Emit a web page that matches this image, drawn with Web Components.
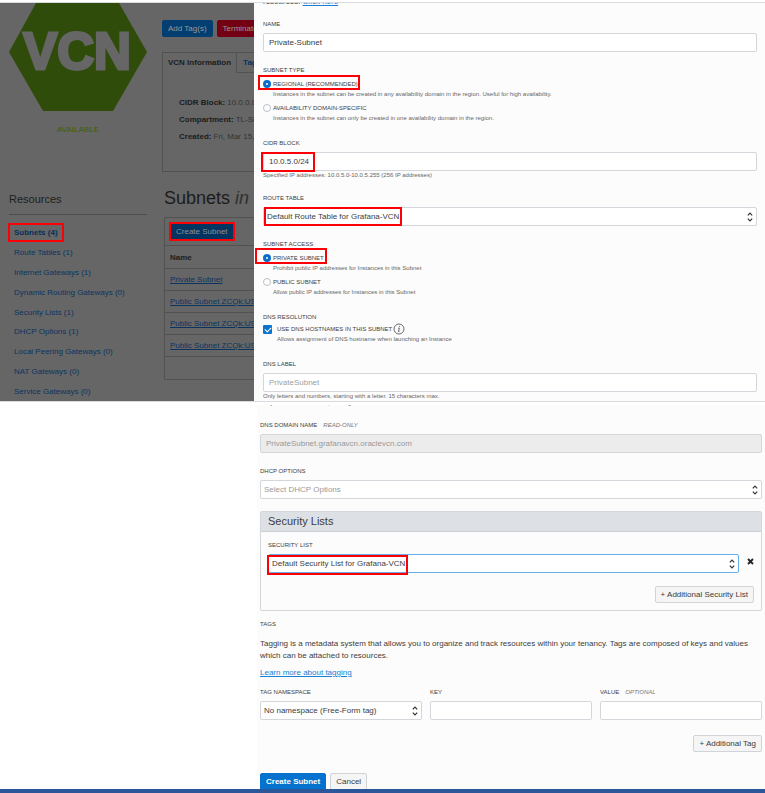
<!DOCTYPE html>
<html lang="en">
<head>
<meta charset="utf-8">
<meta name="viewport" content="width=device-width, initial-scale=1">
<title>Create Subnet</title>
<style>
  :root {
    --ink: #3c3c3c;
    --link: #1b7fd4;
    --line: #d3d7dc;
    --alert: #fb0007;
  }
  body { margin: 0; background: #fff; font-family: "Liberation Sans", Arial, sans-serif; font-size: 8px; color: var(--ink); }
</style>
</head>
<body>
<console-page></console-page>

<script>
const define = (name, html, setup) => {
  const template = document.createElement('template');
  template.innerHTML = '<style>*{box-sizing:border-box}button,input,select{font:inherit;color:inherit;margin:0}</style>' + html;
  customElements.define(name, class extends HTMLElement {
    constructor() {
      super();
      this.attachShadow({ mode: 'open' }).append(template.content.cloneNode(true));
    }
    connectedCallback() {
      if (setup) setup(this, s => this.shadowRoot.querySelector(s));
    }
  });
};

/* Red frame drawn over whatever it wraps */
define('call-out', `
  <style>
    :host { display: block; position: relative; }
    span { position: absolute; inset: var(--frame, 0); width: var(--frame-width, auto); border: 2px solid var(--alert); pointer-events: none; }
  </style>
  <slot></slot><span></span>`);

/* Caption and help text shared by all fields */
const fieldCss = `
  :host { display: block; min-width: 0; }
  .caption { display: flex; gap: 6px; font-size: 6px; line-height: 8px; margin-bottom: 5px; text-transform: uppercase; }
  .caption em { color: #777; }
  .caption em:empty { display: none; }
  .hint { font-size: 6px; line-height: 9px; color: #666; }
  .hint:empty { display: none; }`;

const fillField = (el, $) => {
  $('label, legend').textContent = el.getAttribute('label');
  if ($('em')) $('em').textContent = el.getAttribute('note') || '';
  if ($('.hint')) $('.hint').textContent = el.getAttribute('hint') || '';
};

define('text-field', `
  <style>${fieldCss}
    input { display: block; width: 100%; height: 19px; border: 1px solid var(--line); border-radius: 2px; background: #fff; padding: 0 5px; outline: 0; }
    input::placeholder { color: #a0a0a0; opacity: 1; }
    :host([readonly]) input { background: #ececec; color: #999; }
  </style>
  <div class="caption"><label for="box"></label><em></em></div>
  <input id="box" type="text">
  <div class="hint"></div>`, (el, $) => {
    fillField(el, $);
    $('input').value = el.getAttribute('value') || '';
    $('input').placeholder = el.getAttribute('placeholder') || '';
    $('input').readOnly = el.hasAttribute('readonly');
  });

define('select-field', `
  <style>${fieldCss}
    .box { position: relative; }
    select { display: block; width: 100%; height: 19px; appearance: none; border: 1px solid var(--line); border-radius: 2px; background: #fff; padding: 0 16px 0 3px; outline: 0; }
    svg { position: absolute; right: 4px; top: 5px; width: 6px; height: 10px; pointer-events: none; }
    :host([empty]) select { color: #999; }
    :host([active]) select { border-color: #68aee6; }
  </style>
  <div class="caption"><label for="box"></label></div>
  <div class="box"><select id="box"><option></option></select>
    <svg viewBox="0 0 6 10" fill="none" stroke="#333" stroke-width="1.2"><path d="M.8 3.4 3 1.2 5.2 3.4M.8 6.6 3 8.8 5.2 6.6"/></svg></div>`,
  (el, $) => { fillField(el, $); $('option').textContent = el.getAttribute('value'); });

define('choice-option', `
  <style>
    :host { display: block; }
    .row { display: flex; align-items: center; gap: 2px; height: 10px; font-size: 6px; line-height: 10px; }
    input { appearance: none; flex: none; width: 8px; height: 8px; border: 1px solid #bbc0c6; border-radius: 50%; background: #fff; }
    input:checked { border: 3px solid #0a6cc8; }
    .hint { font-size: 6px; line-height: 10px; padding-left: 10px; color: #666; }
    :host([type=checkbox]) .row { gap: 5px; }
    :host([type=checkbox]) .hint { padding-left: 14px; }
    input[type=checkbox] { width: 9px; height: 9px; border-radius: 1px; border: 0; display: grid; background: #0b74d1; }
    input[type=checkbox]::before { content: ""; width: 5px; height: 3px; border: solid #fff; border-width: 0 0 1px 1px; rotate: -45deg; place-self: center; }
  </style>
  <div class="row"><input id="pick"><label for="pick"></label><slot></slot></div>
  <div class="hint"></div>`, (el, $) => {
    fillField(el, $);
    $('input').type = el.getAttribute('type') || 'radio';
    $('input').checked = el.hasAttribute('checked');
  });

define('choice-group', `
  <style>${fieldCss}
    fieldset { border: 0; margin: 0; padding: 0; min-width: 0; }
    legend { padding: 0; }
    .choices { display: flex; flex-direction: column; gap: 4px; }
    :host([tight]) .caption { margin-bottom: 3px; }
  </style>
  <fieldset><legend class="caption"></legend><div class="choices"><slot></slot></div></fieldset>`, fillField);

define('info-icon', `
  <style>:host { display: block; margin-left: -4px; } svg { display: block; width: 12px; height: 12px; }</style>
  <svg viewBox="0 0 12 12" fill="none" stroke="#444" role="img" aria-label="More information"><circle cx="6" cy="6" r="5" stroke-width=".8"/><path d="M5.2 5.1h1.1L5.5 8.6h1" stroke-width=".8"/><circle cx="6.6" cy="3.3" r=".35" fill="#444" stroke-width=".4"/></svg>`);

define('action-button', `
  <style>
    :host { display: block; flex: none; }
    button { display: block; height: 17px; padding: 0 5px; white-space: nowrap; border: 1px solid var(--edge, #d0d4d8); border-radius: 2px; background: var(--fill, #f5f5f5); color: var(--text, #3c3c3c); font-weight: var(--weight, 400); }
  </style>
  <button type="button"><slot></slot></button>`);

define('vcn-badge', `
  <style>
    :host { display: block; width: 138px; text-align: center; color: #3b6108; line-height: 10px; }
    svg { display: block; width: 138px; height: 108px; margin-bottom: 14px; }
  </style>
  <svg viewBox="0 0 138 108"><path d="M27 0H110L138 49 104 108H34L0 49Z" fill="#304c0a"/>
    <text x="68" y="66" text-anchor="middle" font-family="Liberation Sans, Arial, sans-serif" font-weight="700" font-size="51" fill="#666" stroke="#666" stroke-width="3">VCN</text></svg>
  AVAILABLE`);

define('resource-nav', `
  <style>
    :host { display: flex; flex-direction: column; flex: 1; }
    h2 { margin: 0 0 8px; padding-bottom: 8px; border-bottom: 1px solid #4c4c4c; font-size: 11px; line-height: 13px; font-weight: 400; color: #202020; }
    ul { flex: 1; display: flex; flex-direction: column; list-style: none; margin: 0; padding: 0 0 0 5px; }
    li { flex: 1; display: flex; align-items: center; }
    a { color: #0b3560; text-decoration: none; white-space: nowrap; }
    b { color: #082f58; }
  </style>
  <h2>Resources</h2>
  <ul>
    <li><call-out style="--frame:-5px -6px"><a href="#"><b>Subnets (4)</b></a></call-out></li>
    <li><a href="#">Route Tables (1)</a></li>
    <li><a href="#">Internet Gateways (1)</a></li>
    <li><a href="#">Dynamic Routing Gateways (0)</a></li>
    <li><a href="#">Security Lists (1)</a></li>
    <li><a href="#">DHCP Options (1)</a></li>
    <li><a href="#">Local Peering Gateways (0)</a></li>
    <li><a href="#">NAT Gateways (0)</a></li>
    <li><a href="#">Service Gateways (0)</a></li>
  </ul>`);

define('vcn-details', `
  <style>
    :host { display: block; min-width: 0; color: #333; }
    .actions { display: flex; gap: 4px; margin-bottom: 15px; }
    .tabs { display: flex; line-height: 19px; font-weight: 700; border-left: 1px solid #525252; }
    .tabs a { color: #04365f; text-decoration: none; padding: 0 6px; border: 1px solid #525252; border-left: 0; white-space: nowrap; }
    .tabs a:first-child { color: #1c1c1c; border-bottom-color: #666; padding: 0 5px; }
    .tabs a:last-child { flex: 1; }
    dl { margin: 0; border: 1px solid #525252; border-width: 0 0 1px 1px; padding: 21px 0 26px 16px; line-height: 17px; white-space: nowrap; }
    dl div { display: flex; gap: 2px; }
    dt { font-weight: 700; color: #1c1c1c; }
    dd { margin: 0; }
  </style>
  <div class="actions">
    <action-button style="--fill:#023e70;--edge:#023e70;--text:#999">Add Tag(s)</action-button>
    <action-button style="--fill:#740014;--edge:#740014;--text:#999">Terminate</action-button>
  </div>
  <div class="tabs"><a href="#">VCN Information</a><a href="#">Tags</a></div>
  <dl>
    <div><dt>CIDR Block:</dt><dd>10.0.0.0/16</dd></div>
    <div><dt>Compartment:</dt><dd>TL-SP</dd></div>
    <div><dt>Created:</dt><dd>Fri, Mar 15,</dd></div>
  </dl>`);

define('subnet-list', `
  <style>
    :host { display: block; min-width: 0; }
    h1 { margin: 0 0 7px; font-size: 18px; line-height: 24px; font-weight: 400; color: #1c1c1c; white-space: nowrap; }
    h1 i { color: #303030; }
    .card { border: 1px solid #525252; border-right: 0; border-radius: 2px 0 0 2px; }
    .bar { display: flex; padding: 5px; height: 27px; }
    table { width: 100%; border-collapse: collapse; }
    th, td { height: 22px; padding: 0 5px; border-top: 1px solid #525252; text-align: left; white-space: nowrap; }
    th { color: #1c1c1c; height: 23px; }
    a { color: #0b3560; }
  </style>
  <h1>Subnets <i>in</i></h1>
  <div class="card">
    <div class="bar"><call-out style="--frame:-1px"><action-button style="--fill:#04345f;--edge:#04345f;--text:#8a9199">Create Subnet</action-button></call-out></div>
    <table>
      <thead><tr><th>Name</th></tr></thead>
      <tbody>
        <tr><td><a href="#">Private Subnet</a></td></tr>
        <tr><td><a href="#">Public Subnet ZCQk:US-</a></td></tr>
        <tr><td><a href="#">Public Subnet ZCQk:US-</a></td></tr>
        <tr><td><a href="#">Public Subnet ZCQk:US-</a></td></tr>
        <tr><td></td></tr>
      </tbody>
    </table>
  </div>`);

define('dimmed-console', `
  <style>
    :host { display: grid; grid-template-columns: 138px 1fr; column-gap: 15px; padding-left: 9px; background: #666; overflow: hidden; min-width: 0; }
    .side { display: flex; flex-direction: column; gap: 58px; }
    .main { min-width: 0; padding-top: 17px; display: flex; flex-direction: column; gap: 14px; }
    subnet-list { margin-left: 2px; }
  </style>
  <div class="side"><vcn-badge></vcn-badge><resource-nav></resource-nav></div>
  <div class="main"><vcn-details></vcn-details><subnet-list></subnet-list></div>`);

define('subnet-form', `
  <style>
    :host { display: flex; flex-direction: column; gap: 14px; padding: 0 8px 0 9px; background: #fcfcfc; overflow: hidden; min-width: 0; }
    p { margin: -6px 0 0; line-height: 9px; }
    a { color: var(--link); }
    choice-group { margin-bottom: 2px; }
  </style>
  <p>resources. <a href="#">Click here</a></p>
  <text-field label="Name" value="Private-Subnet"></text-field>
  <choice-group label="Subnet type">
    <call-out style="--frame:-4px auto 9px -5px;--frame-width:102px"><choice-option checked label="REGIONAL (RECOMMENDED)" hint="Instances in the subnet can be created in any availability domain in the region. Useful for high availability."></choice-option></call-out>
    <choice-option label="AVAILABILITY DOMAIN-SPECIFIC" hint="Instances in the subnet can only be created in one availability domain in the region."></choice-option>
  </choice-group>
  <call-out style="--frame:13px auto 8px -2px;--frame-width:54px"><text-field label="CIDR block" value="10.0.5.0/24" hint="Specified IP addresses: 10.0.5.0-10.0.5.255 (256 IP addresses)"></text-field></call-out>
  <call-out style="--frame:13px auto 0 1px;--frame-width:138px"><select-field label="Route table" value="Default Route Table for Grafana-VCN"></select-field></call-out>
  <choice-group label="Subnet access">
    <call-out style="--frame:-5px auto 9px -8px;--frame-width:72px"><choice-option checked label="PRIVATE SUBNET" hint="Prohibit public IP addresses for Instances in this Subnet"></choice-option></call-out>
    <choice-option label="PUBLIC SUBNET" hint="Allow public IP addresses for Instances in this Subnet"></choice-option>
  </choice-group>
  <choice-group tight label="DNS resolution">
    <choice-option type="checkbox" checked label="USE DNS HOSTNAMES IN THIS SUBNET" hint="Allows assignment of DNS hostname when launching an Instance"><info-icon></info-icon></choice-option>
  </choice-group>
  <text-field label="DNS label" placeholder="PrivateSubnet" hint="Only letters and numbers, starting with a letter. 15 characters max."></text-field>`);

define('security-lists', `
  <style>
    :host { display: block; border: 1px solid var(--line); border-radius: 2px; }
    h3 { margin: 0; padding: 0 7px; background: #dde1e5; border-bottom: 1px solid #cbd0d5; font-size: 11px; line-height: 19px; font-weight: 400; }
    .body { padding: 9px 7px 7px; }
    .row { display: flex; align-items: flex-end; gap: 8px; margin-bottom: 13px; }
    call-out { flex: 1; }
    .remove { border: 0; background: none; padding: 0; width: 7px; height: 19px; display: flex; }
    svg { width: 7px; height: 7px; margin-top: 4px; }
    .end { display: flex; justify-content: flex-end; }
  </style>
  <h3>Security Lists</h3>
  <div class="body">
    <div class="row">
      <call-out style="--frame:14px auto -2px -1px;--frame-width:141px"><select-field active label="Security list" value="Default Security List for Grafana-VCN"></select-field></call-out>
      <button class="remove" type="button" aria-label="Remove"><svg viewBox="0 0 7 7"><path d="M1 1 6 6M6 1 1 6" stroke="#222" stroke-width="1.8"/></svg></button>
    </div>
    <div class="end"><action-button>+ Additional Security List</action-button></div>
  </div>`);

define('subnet-options', `
  <style>
    :host { display: block; background: #fcfcfc; overflow: hidden; padding: 0 3px; min-width: 0; }
    .stack { display: flex; flex-direction: column; gap: 14px; }
    .cut { margin: -6px 0 -1px 1px; font-size: 6px; line-height: 9px; color: #666; }
    security-lists { margin-top: -2px; }
    h4 { margin: 9px 0 10px; font-size: 6px; line-height: 8px; font-weight: 400; }
    p { margin: 0 0 5px; line-height: 12px; }
    a { color: var(--link); }
    .tags { display: grid; grid-template-columns: repeat(3, 1fr); gap: 8px; margin: 9px 0 15px; }
    .end { display: flex; justify-content: flex-end; margin-bottom: 21px; }
    .actions { display: flex; gap: 4px; margin-bottom: -1px; }
  </style>
  <div class="stack">
    <div class="cut">Only letters and numbers, starting with a letter. 15 characters max.</div>
    <text-field readonly label="DNS domain name" note="Read-only" value="PrivateSubnet.grafanavcn.oraclevcn.com"></text-field>
    <select-field empty label="DHCP options" value="Select DHCP Options"></select-field>
    <security-lists></security-lists>
  </div>
  <h4>TAGS</h4>
  <p>Tagging is a metadata system that allows you to organize and track resources within your tenancy. Tags are composed of keys and values which can be attached to resources.</p>
  <p><a href="#">Learn more about tagging</a></p>
  <div class="tags">
    <select-field label="Tag namespace" value="No namespace (Free-Form tag)"></select-field>
    <text-field label="Key"></text-field>
    <text-field label="Value" note="Optional"></text-field>
  </div>
  <div class="end"><action-button>+ Additional Tag</action-button></div>
  <div class="actions">
    <action-button style="--fill:#0572ce;--edge:#0572ce;--text:#fff;--weight:700">Create Subnet</action-button>
    <action-button>Cancel</action-button>
  </div>`);

define('console-page', `
  <style>
    :host { display: flex; flex-direction: column; min-height: 100vh; }
    .top { display: grid; grid-template-columns: 254px 1fr; margin-top: 2px; border: solid #d8dadd; border-width: 1px 0; }
    .bottom { display: grid; grid-template-columns: 257px 1fr; padding-top: 3px; }
    subnet-options { grid-column: 2; }
    footer { flex: 1; min-height: 4px; background: #2b579a; }
  </style>
  <div class="top"><dimmed-console></dimmed-console><subnet-form></subnet-form></div>
  <div class="bottom"><subnet-options></subnet-options></div>
  <footer></footer>`);
</script>
</body>
</html>
